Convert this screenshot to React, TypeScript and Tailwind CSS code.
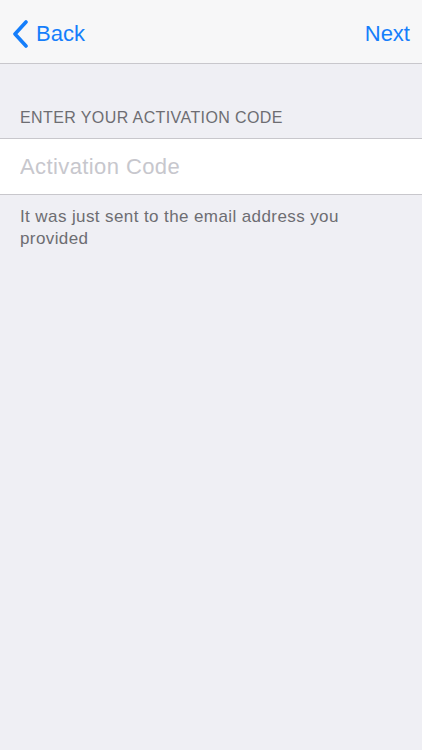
export default function App() {
  return (
    <div
      className="flex h-[750px] w-[422px] flex-col bg-[#efeff4]"
      style={{ fontFamily: '"Liberation Sans", Arial, sans-serif' }}
    >
      <div className="flex h-[64px] items-center justify-between border-b border-[#c8c7cc] bg-[#f7f7f8] pl-[11px] pr-[12px] pt-[4px]">
        <button type="button" className="flex items-center gap-[7px] text-[#157efb]">
          <svg width="18" height="28" viewBox="0 0 18 28" fill="none">
            <path d="M15 2 L4 14 L15 26" stroke="#157efb" strokeWidth="3.6" strokeLinecap="round" strokeLinejoin="round" />
          </svg>
          <span className="text-[22px] leading-none">Back</span>
        </button>
        <button type="button" className="text-[22px] leading-none text-[#157efb]">
          Next
        </button>
      </div>

      <div className="px-[20px] pb-[10px] pt-[44px] text-[16px] leading-[20px] tracking-[0.4px] text-[#6d6d72]">
        ENTER YOUR ACTIVATION CODE
      </div>
      <div className="flex h-[57px] items-center border-y border-[#c8c7cc] bg-white px-[20px]">
        <input
          placeholder="Activation Code"
          className="w-full bg-transparent text-[22px] tracking-[0.4px] text-black outline-none placeholder:text-[#c7c7cd]"
        />
      </div>
      <div className="px-[20px] pr-[60px] pt-[11px] text-[17px] leading-[22px] tracking-[0.4px] text-[#6d6d72]">
        It was just sent to the email address you provided
      </div>
    </div>
  );
}
